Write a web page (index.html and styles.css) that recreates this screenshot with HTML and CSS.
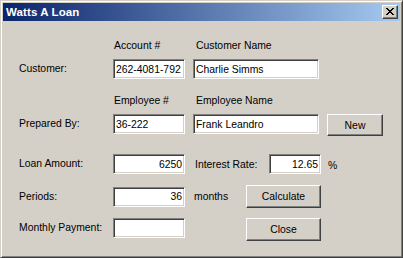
FILE: index.html
```html
<!DOCTYPE html>
<html lang="en">
<head>
    <meta charset="UTF-8">
    <title>Watts A Loan</title>
    <link rel="stylesheet" href="styles.css">
</head>
<body>
    <div class="window">
        <div class="titlebar">
            <span class="title">Watts A Loan</span>
            <button class="close-btn">
                <svg width="8" height="7" viewBox="0 0 8 7" shape-rendering="crispEdges">
                    <path d="M0 0h2v1h-2z M6 0h2v1h-2z M1 1h2v1h-2z M5 1h2v1h-2z M2 2h4v1h-4z M3 3h2v1h-2z M2 4h4v1h-4z M1 5h2v1h-2z M5 5h2v1h-2z M0 6h2v1h-2z M6 6h2v1h-2z" fill="#000"/>
                </svg>
            </button>
        </div>

        <div class="form">
            <div class="hdr hdr-first">
                <span class="col-label"></span>
                <span class="col-num">Account #</span>
                <span class="col-name">Customer Name</span>
            </div>
            <div class="row row-top">
                <label class="col-label">Customer:</label>
                <input class="edit col-box" type="text" value="262-4081-792">
                <input class="edit col-wide" type="text" value="Charlie Simms">
            </div>

            <div class="hdr hdr-second">
                <span class="col-label"></span>
                <span class="col-num">Employee #</span>
                <span class="col-name">Employee Name</span>
            </div>
            <div class="row row-top">
                <label class="col-label">Prepared By:</label>
                <input class="edit col-box" type="text" value="36-222">
                <input class="edit col-wide" type="text" value="Frank Leandro">
                <button class="btn btn-new">New</button>
            </div>

            <div class="row row-loan">
                <label class="col-label">Loan Amount:</label>
                <input class="edit col-box num" type="text" value="6250">
                <label class="rate-label">Interest Rate:</label>
                <input class="edit rate-box num" type="text" value="12.65">
                <span class="pct">%</span>
            </div>

            <div class="row row-periods">
                <label class="col-label">Periods:</label>
                <input class="edit col-box num" type="text" value="36">
                <span class="months">months</span>
                <button class="btn btn-wide">Calculate</button>
            </div>

            <div class="row row-top row-payment">
                <label class="col-label">Monthly Payment:</label>
                <input class="edit col-box num" type="text" value="">
                <button class="btn btn-wide btn-close">Close</button>
            </div>
        </div>
    </div>
</body>
</html>
```

FILE: styles.css
```css
* {
    margin: 0;
    padding: 0;
    box-sizing: border-box;
}
body {
    width: 403px;
    height: 258px;
    overflow: hidden;
    font-family: "Liberation Sans", Arial, sans-serif;
    font-size: 10.4px;
    color: #000;
}
.window {
    width: 403px;
    height: 258px;
    background: #d4d0c8;
    border: 1px solid;
    border-color: #d4d0c8 #404040 #404040 #d4d0c8;
    box-shadow: inset 1px 1px #fff, inset -1px -1px #808080;
    padding: 2px;
}
.titlebar {
    height: 18px;
    display: flex;
    align-items: center;
    padding-left: 3px;
    padding-right: 2px;
    background: linear-gradient(90deg, #0a246a 0%, #a6caf0 100%);
}
.title {
    color: #fff;
    font-weight: bold;
    font-size: 11.5px;
    letter-spacing: 0.1px;
}
.close-btn {
    margin-left: auto;
    width: 16px;
    height: 14px;
    background: #d4d0c8;
    border: 1px solid;
    border-color: #fff #404040 #404040 #fff;
    box-shadow: inset -1px -1px #808080;
    display: flex;
    align-items: center;
    justify-content: center;
    padding: 0 1px 1px 0;
}
.close-btn svg {
    display: block;
}
.form {
    padding: 19px 0 0 16px;
}
.hdr {
    display: flex;
    height: 12px;
    line-height: 12px;
}
.hdr-second {
    margin-top: 16px;
}
.row {
    display: flex;
    align-items: center;
}
.row-top {
    align-items: flex-start;
    margin-top: 7px;
}
.hdr + .row-top {
    margin-top: 7px;
}
.col-label {
    width: 94px;
    flex-shrink: 0;
    line-height: 20px;
}
.hdr .col-label {
    line-height: 12px;
}
.col-num {
    width: 80px;
    padding-left: 1px;
}
.col-name {
    padding-left: 3px;
}
.edit {
    height: 20px;
    background: #fff;
    border: 1px solid;
    border-color: #808080 #fff #fff #808080;
    box-shadow: inset 1px 1px #404040, inset -1px -1px #d4d0c8;
    font-family: inherit;
    font-size: inherit;
    color: #000;
    padding: 0 2px;
    outline: none;
}
.num {
    text-align: right;
}
.col-box {
    width: 72px;
}
.col-wide {
    width: 126px;
    margin-left: 8px;
}
.btn {
    background: #d4d0c8;
    border: 1px solid;
    border-color: #fff #404040 #404040 #fff;
    box-shadow: inset -1px -1px #808080;
    font-family: inherit;
    font-size: inherit;
    color: #000;
}
.btn-new {
    width: 56px;
    height: 22px;
    margin-left: 8px;
}
.row-loan {
    margin-top: 18px;
    height: 20px;
}
.rate-label {
    width: 74px;
    margin-left: 10px;
}
.rate-box {
    width: 52px;
}
.pct {
    margin-left: 7px;
    margin-top: 2px;
}
.row-periods {
    margin-top: 11px;
    height: 23px;
}
.months {
    width: 52px;
    margin-left: 9px;
}
.btn-wide {
    width: 75px;
    height: 23px;
}
.row-payment {
    margin-top: 10px;
}
.row-payment .col-label {
    line-height: 19px;
}
.btn-close {
    margin-left: 61px;
}
```
